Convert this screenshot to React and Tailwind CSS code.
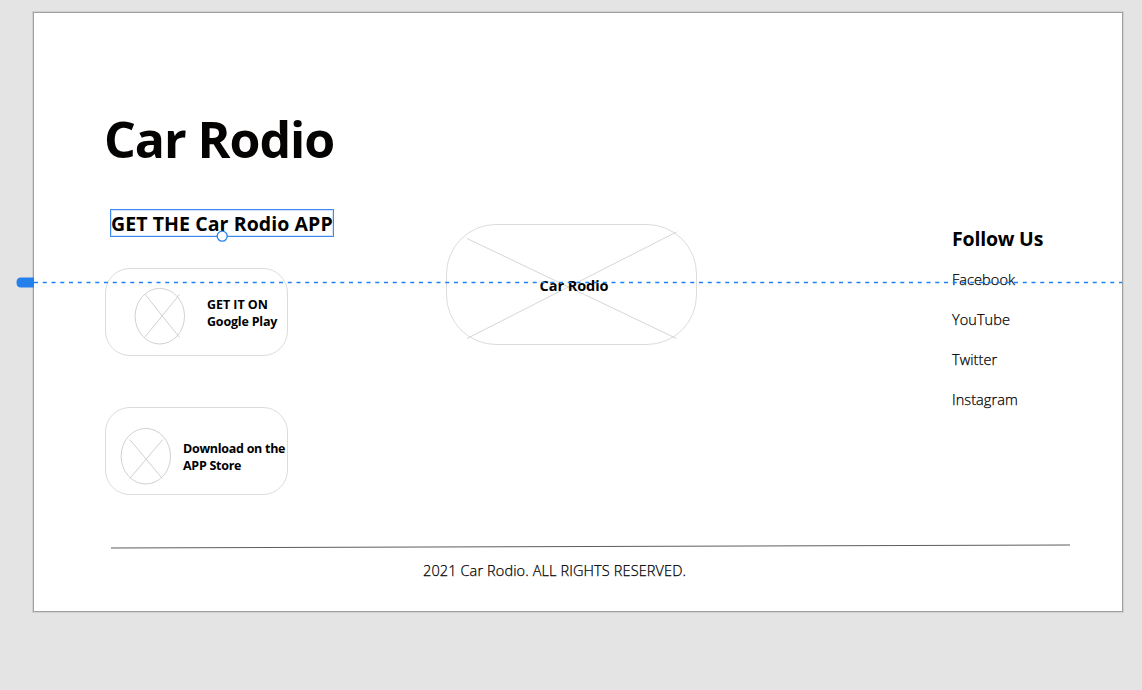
const links = ["Facebook", "YouTube", "Twitter", "Instagram"];

function RoundIcon({ crossTop, className }) {
  return (
    <svg
      className={className}
      width="52"
      height="58"
      viewBox="0 0 52 58"
      fill="none"
      stroke="#cbcbcb"
      strokeWidth="0.9"
    >
      <ellipse cx="25.8" cy="29.2" rx="24.7" ry="27.8" />
      {crossTop ? (
        <path d="M11.2 7.5L45.5 50.5M45.5 7.5L10.5 50.5" />
      ) : (
        <path d="M9.8 12.5L42.3 51.5M42.8 12.5L9.8 51.5" />
      )}
    </svg>
  );
}

function StoreButton({ children, className }) {
  return (
    <div
      className={`flex h-[88px] w-[183px] rounded-[25px] border border-[#dcdcdc] ${className}`}
    >
      {children}
    </div>
  );
}

export default function App() {
  return (
    <div className="flex h-[690px] w-[1142px] items-start overflow-hidden bg-[#e4e4e4] pl-[33px] pt-3 font-['Open_Sans','Noto_Sans',sans-serif] text-black">
      <main className="relative flex h-[600px] w-[1090px] flex-col border border-[#a0a0a0] bg-white shadow-[0_0_0_1px_#d0d0d0]">
        <div className="flex h-[531px]">
          <section className="ml-[71px] flex w-[240px] flex-col">
            <h1 className="-ml-px mt-[91px] h-[70px] whitespace-nowrap text-[50px] font-bold leading-[70px] tracking-[-1.05px] text-[#050202]">
              Car Rodio
            </h1>
            <div className="relative ml-[5px] mt-[35px] h-[28px] w-[224px] border border-[#3f8cf0] shadow-[inset_0_0_0_1px_#d3e5fc]">
              <h2 className="whitespace-nowrap text-[19.5px] font-bold leading-[28px] tracking-[0.08px]">
                GET THE Car Rodio APP
              </h2>
              <svg
                className="absolute left-[105px] top-[20px]"
                width="13"
                height="13"
                viewBox="0 0 13 13"
              >
                <circle
                  cx="6.2"
                  cy="6.2"
                  r="5"
                  fill="#fff"
                  stroke="#2680eb"
                  strokeWidth="1.3"
                />
              </svg>
            </div>
            <StoreButton className="mt-[31px]">
              <RoundIcon crossTop className="ml-[28px] mt-[18px] shrink-0" />
              <p className="ml-[21px] mt-[27px] whitespace-nowrap text-[12.5px] font-bold leading-[17px] tracking-[-0.2px]">
                <span className="tracking-[-0.05px]">GET IT ON</span>
                <br />
                Google Play
              </p>
            </StoreButton>
            <StoreButton className="mt-[51px]">
              <RoundIcon className="ml-[14px] mt-[19px] shrink-0" />
              <p className="ml-[11px] mt-[32px] whitespace-nowrap text-[12.5px] font-bold leading-[17px] tracking-[-0.28px]">
                Download on the
                <br />
                APP Store
              </p>
            </StoreButton>
          </section>

          <section className="relative ml-[101px] mt-[211px] flex h-[121px] w-[251px] justify-center rounded-[50px] border border-[#dcdcdc]">
            <svg
              className="absolute -left-px -top-px"
              width="251"
              height="121"
              viewBox="0 0 251 121"
              fill="none"
              stroke="#d6d6d6"
            >
              <path d="M21 14.5L230.500 114.500M21 114.500L230.500 8" />
            </svg>
            <p className="relative ml-[5px] mt-[50px] h-[22px] whitespace-nowrap text-[14.5px] font-bold leading-[22px] tracking-[-0.05px]">
              Car Rodio
            </p>
          </section>

          <nav className="ml-[255px] mt-[211px] w-[130px]">
            <h2 className="h-[30px] whitespace-nowrap text-[19.5px] font-bold leading-[30px] tracking-[-0.2px]">
              Follow Us
            </h2>
            <ul className="mt-[6px] text-[14.5px] font-light tracking-[0.07px] [-webkit-text-stroke:0.25px_#000]">
              {links.map((label) => (
                <li key={label} className="h-10 leading-[40px]">
                  {label}
                </li>
              ))}
            </ul>
          </nav>
        </div>

        <footer className="flex flex-col">
          <svg
            className="ml-[77px]"
            width="960"
            height="6"
            viewBox="0 0 960 6"
            fill="none"
            stroke="#5c5c5c"
          >
            <path d="M0 4L959 1" />
          </svg>
          <p className="ml-[389px] mt-[10px] whitespace-nowrap text-[14.5px] font-light leading-[22px] tracking-[0.12px] [-webkit-text-stroke:0.25px_#000]">
            2021 Car Rodio. ALL RIGHTS RESERVED.
          </p>
        </footer>

        <svg
          className="absolute -left-[18px] top-[264px]"
          width="1106"
          height="11"
          viewBox="0 0 1106 11"
        >
          <path d="M18 0.500H5Q0.500 0.500 0.500 5.500Q0.500 10.500 5 10.500H18Z" fill="#2680eb" />
          <path
            d="M18 5.500H1106"
            stroke="#1f80f5"
            strokeWidth="1.400"
            strokeDasharray="4 4.750"
            fill="none"
          />
        </svg>
      </main>
    </div>
  );
}
